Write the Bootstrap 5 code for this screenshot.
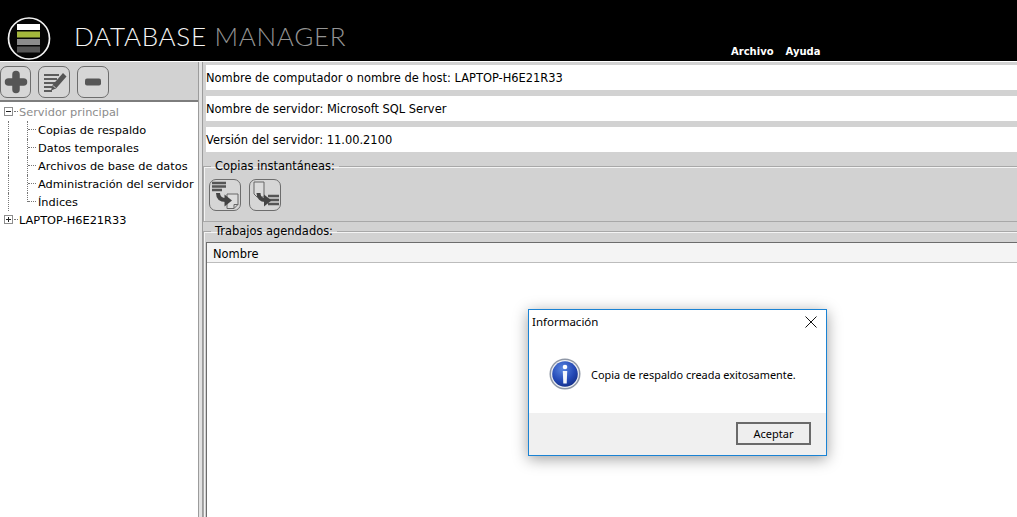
<!DOCTYPE html>
<html lang="es">
<head>
<meta charset="utf-8">
<title>Database Manager</title>
<link href="https://cdn.jsdelivr.net/npm/bootstrap@5.3.0/dist/css/bootstrap.min.css" rel="stylesheet">
<style>
html,body{height:100%;overflow:hidden}
body{font-family:"DejaVu Sans",sans-serif;font-size:11.45px;line-height:18px;color:#000;background:#d2d2d2}
.app-shell{width:1017px;height:517px;position:relative}
.app-head{height:61px;background:#000}
.app-logo{margin:17px 0 0 7px;flex:none}
.app-title{font-family:"Lato",sans-serif;font-weight:300;font-size:26px;line-height:34px;margin:19px 0 0 23px;color:#f4f4f4;letter-spacing:.7px;width:657px}
.app-title span{color:#949494}
.app-menu{margin-top:44px;gap:12px;font-weight:700;font-size:10px;line-height:15px;color:#fff}
.app-body{height:456px;border-top:1px solid #fff}
.side-pane{width:198px;flex:none;background:#fff}
.side-tools{height:40px;background:#d2d2d2;border-bottom:2px solid #7d7d7d;padding:4px 0 0 0;gap:7px}
.tool-btn{width:32px;height:32px;padding:0;border:1px solid #6d6d6d;border-radius:7px;background:#d6d6d6;flex:none;display:flex;align-items:center;justify-content:center}
.tool-first{width:31px}
.tree-box{padding-top:1px}
.tree-row{height:18px;display:flex;white-space:nowrap}
.tree-root{color:#8c8c8c}
.tree-pad{width:4px;flex:none}
.tree-exp{width:9px;height:9px;border:1px solid #8d8d8d;background:#fff;flex:none;margin-top:4px}
.tree-exp::before{content:"";display:block;width:5px;height:1px;background:#222;margin:3px 1px 0}
.tree-exp.plus::after{content:"";display:block;width:1px;height:5px;background:#222;margin:-3px 0 0 3px}
.tree-dash{width:4px;margin-left:1px;margin-right:1px;height:9px;border-bottom:1px dotted #777;flex:none}
.tree-kid{padding-left:8px}
.tree-trunk{width:19px;flex:none;border-left:1px dotted #777}
.tree-fork{width:11px;flex:none;height:18px;border-left:1px dotted #777}
.tree-fork.last{height:9px}
.tree-fork i{display:block;height:9px;border-bottom:1px dotted #777;margin-right:2px}
.tree-label{font-size:11.35px}
.split-bar{width:5px;flex:none;background:#e2e2e2;border-left:1px solid #9c9c9c;border-right:1px solid #9c9c9c}
.main-pane{min-width:0;flex:1 1 auto;padding-top:3px;background:#d2d2d2}
.info-line{height:25px;background:#fff;margin:0 0 6px 2.500px;padding:4px 0 0 .500px;line-height:18px;white-space:nowrap}
.grp{border:0;border-top:1px solid #a8a8a8;border-left:1px solid #a8a8a8;margin:0;padding:0;min-width:0;box-shadow:inset 1px 1px 0 #f4f4f4}
.grp legend{float:none;width:auto;font-size:11.45px;line-height:14px;margin:0 0 0 7px;padding:0 4px;color:#000}
.grp-snap{height:63px;margin-top:7px;border-bottom:1px solid #a8a8a8}
.grp-snap .snap-row{gap:8px;padding:6px 0 0 5px}
.grp-jobs{height:293px;margin-top:2px}
.jobs-wrap{margin:4px 0 0 2px;height:280px;background:#fff;border-left:1px solid #6c6c6c;border-top:1px solid #6c6c6c}
.jobs-head{height:20px;background:#f4f4f4;border-bottom:1px solid #bcbcbc;padding:2px 0 0 6px;line-height:18px}
.dlg{position:absolute;left:528px;top:309px;width:299px;height:147px;background:#fff;border:1px solid #1a83d4;box-shadow:0 3px 14px rgba(0,0,0,.38);font-family:"Noto Sans",sans-serif;font-size:10.9px;color:#000}
.dlg-title{height:24px;padding:2px 0 0 3px;font-size:11.5px;line-height:20px}
.dlg-x{margin:6px 9px 0 0;flex:none}
.dlg-body{height:79px;padding:24px 0 23px 20px;gap:10px}
.dlg-icon{flex:none}
.dlg-msg{padding-top:2px}
.dlg-foot{height:42px;background:#f0f0f0;padding:9px 15px 0 0}
.dlg-ok{width:75px;height:23px;padding:0;font-size:11px;line-height:17px;background:#eee;border:2px solid #6a6a6a;border-radius:0;color:#000;font-family:"Noto Sans",sans-serif}
</style>
</head>
<body>
<div class="app-shell">
  <header class="app-head d-flex">
    <svg class="app-logo" width="44" height="44" viewBox="0 0 44 44">
      <circle cx="22" cy="21.5" r="20.5" fill="#050505" stroke="#f2f2f2" stroke-width="1.7"/>
      <rect x="10" y="7" width="23" height="6" fill="#fff"/>
      <rect x="10" y="14.5" width="23" height="6" fill="#a5b83c"/>
      <rect x="10" y="22" width="23" height="6" fill="#8b8b8b"/>
      <rect x="10" y="29.500" width="23" height="6" fill="#565656"/>
    </svg>
    <div class="app-title">DATABASE <span>MANAGER</span></div>
    <nav class="app-menu d-flex"><span>Archivo</span><span>Ayuda</span></nav>
  </header>
  <div class="app-body d-flex">
    <aside class="side-pane">
      <div class="side-tools d-flex">
        <button class="tool-btn tool-first" type="button" aria-label="Agregar"><svg width="26" height="26" viewBox="0 0 26 26"><path d="M13 5.500v15M5.500 13h15" stroke="#565656" stroke-width="7.500" stroke-linecap="round" fill="none"/></svg></button>
        <button class="tool-btn" type="button" aria-label="Editar"><svg width="28" height="28" viewBox="0 0 28 28"><path d="M4 7h15M4 11h13M4 15h11M4 19h8M4 23h8" stroke="#5c5c5c" stroke-width="2" fill="none"/><path d="M11 22.500l1.500-5.500L23 5l3.500 3.500L16 20.500z" fill="#555"/><path d="M13 17.500l2.500 2.500" stroke="#d6d6d6" stroke-width="1"/></svg></button>
        <button class="tool-btn" type="button" aria-label="Quitar"><svg width="26" height="26" viewBox="0 0 26 26"><rect x="5" y="9.500" width="16" height="7" rx="2" fill="#565656"/></svg></button>
      </div>
      <div class="tree-box">
        <div class="tree-row tree-root"><span class="tree-pad"></span><span class="tree-exp"></span><span class="tree-dash"></span><span class="tree-label">Servidor principal</span></div>
        <div class="tree-row tree-kid"><span class="tree-trunk"></span><span class="tree-fork"><i></i></span><span class="tree-label">Copias de respaldo</span></div>
        <div class="tree-row tree-kid"><span class="tree-trunk"></span><span class="tree-fork"><i></i></span><span class="tree-label">Datos temporales</span></div>
        <div class="tree-row tree-kid"><span class="tree-trunk"></span><span class="tree-fork"><i></i></span><span class="tree-label">Archivos de base de datos</span></div>
        <div class="tree-row tree-kid"><span class="tree-trunk"></span><span class="tree-fork"><i></i></span><span class="tree-label">Administración del servidor</span></div>
        <div class="tree-row tree-kid"><span class="tree-trunk"></span><span class="tree-fork last"><i></i></span><span class="tree-label">Índices</span></div>
        <div class="tree-row"><span class="tree-pad"></span><span class="tree-exp plus"></span><span class="tree-dash"></span><span class="tree-label">LAPTOP-H6E21R33</span></div>
      </div>
    </aside>
    <div class="split-bar"></div>
    <main class="main-pane">
      <div class="info-line">Nombre de computador o nombre de host: LAPTOP-H6E21R33</div>
      <div class="info-line">Nombre de servidor: Microsoft SQL Server</div>
      <div class="info-line">Versión del servidor: 11.00.2100</div>
      <fieldset class="grp grp-snap">
        <legend>Copias instantáneas:</legend>
        <div class="snap-row d-flex">
          <button class="tool-btn" type="button" aria-label="Crear copia"><svg width="30" height="30" viewBox="0 0 30 30"><path d="M2 3h14M2 6.500h14M2 10h10" stroke="#555" stroke-width="2.400"/><path d="M17 14h11v10.500L24 28.500h-7z" fill="#dcdcdc" stroke="#666"/><path d="M24 28.500v-4h4" fill="none" stroke="#666"/><path d="M8 13c0 5 3 7 8 7" fill="none" stroke="#444" stroke-width="4"/><path d="M14.500 14.500L22 20.500l-7.500 6z" fill="#444"/></svg></button>
          <button class="tool-btn" type="button" aria-label="Restaurar copia"><svg width="30" height="30" viewBox="0 0 30 30"><path d="M4 2h10v15H7l-3-3z" fill="#dcdcdc" stroke="#666"/><path d="M18 16h11M18 20h11M18 24h11" stroke="#555" stroke-width="2.400"/><path d="M8.500 13c0 5 3 7 6.500 7" fill="none" stroke="#444" stroke-width="4"/><path d="M14 14.500L21.500 20.500l-7.500 6z" fill="#444"/></svg></button>
        </div>
      </fieldset>
      <fieldset class="grp grp-jobs">
        <legend>Trabajos agendados:</legend>
        <div class="jobs-wrap">
          <div class="jobs-head">Nombre</div>
        </div>
      </fieldset>
    </main>
  </div>
  <div class="dlg" role="dialog">
    <div class="d-flex justify-content-between">
      <div class="dlg-title">Información</div>
      <svg class="dlg-x" width="12" height="12" viewBox="0 0 12 12"><path d="M.5.5l11 11M11.500.5l-11 11" stroke="#111" stroke-width="1"/></svg>
    </div>
    <div class="dlg-body d-flex align-items-center">
      <svg width="32" height="32" viewBox="0 0 32 32" class="dlg-icon">
        <defs><radialGradient id="ig" cx=".4" cy=".3" r=".8"><stop offset="0" stop-color="#5a86e0"/><stop offset=".6" stop-color="#2348b5"/><stop offset="1" stop-color="#12297e"/></radialGradient></defs>
        <circle cx="16" cy="16" r="15.500" fill="#8f97a6"/>
        <circle cx="16" cy="16" r="14" fill="#eef0f4"/>
        <circle cx="16" cy="16" r="12.800" fill="url(#ig)"/>
        <circle cx="16" cy="9" r="2.300" fill="#fff"/>
        <path d="M13.800 13h4.400l-.5 12.500h-3.400z" fill="#f4f6fb"/>
      </svg>
      <div class="dlg-msg">Copia de respaldo creada exitosamente.</div>
    </div>
    <div class="dlg-foot d-flex justify-content-end"><button class="dlg-ok" type="button">Aceptar</button></div>
  </div>
</div>
</body>
</html>
